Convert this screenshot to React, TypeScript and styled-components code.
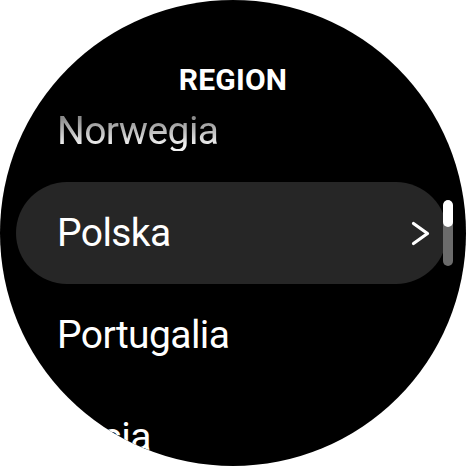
import React from "react";
import styled, { createGlobalStyle } from "styled-components";

const Global = createGlobalStyle`
  html, body { margin: 0; padding: 0; background: #ffffff; }
  #root { width: 466px; height: 466px; }
`;

const Watch = styled.div`
  position: relative;
  width: 466px;
  height: 466px;
  border-radius: 50%;
  overflow: hidden;
  background: #000000;
  font-family: Roboto, "Liberation Sans", sans-serif;
  color: #ffffff;
`;

const Title = styled.div`
  position: absolute;
  top: 62px;
  left: 0;
  right: 0;
  text-align: center;
  font-size: 30px;
  font-weight: 700;
  line-height: 36px;
  letter-spacing: 0.2px;
`;

const List = styled.div`
  display: flex;
  flex-direction: column;
  padding-top: 80px;
`;

const Row = styled.div<{ $active?: boolean }>`
  display: flex;
  align-items: center;
  justify-content: space-between;
  height: 102px;
  margin: 0 19px 0 16px;
  padding: 0 17px 0 41px;
  box-sizing: border-box;
  border-radius: 51px;
  background: ${(p) => (p.$active ? "#262626" : "transparent")};
`;

const Label = styled.span<{ $faded?: boolean }>`
  font-size: 39px;
  line-height: 1;
  letter-spacing: -0.6px;
  ${(p) =>
    p.$faded
      ? `background: linear-gradient(to bottom, #8a8a8a 15%, #f2f2f2 85%);
         -webkit-background-clip: text;
         background-clip: text;
         color: transparent;`
      : "color: #ffffff;"}
`;

const Chevron = styled.svg`
  width: 19px;
  height: 25px;
  flex: none;
`;

const Scroll = styled.div`
  position: absolute;
  left: 443px;
  top: 200px;
  width: 10px;
  height: 66px;
  border-radius: 5px;
  background: #6b6b6b;
  overflow: hidden;
`;

const Thumb = styled.div`
  height: 27px;
  border-radius: 5px;
  background: #ffffff;
`;

const items = [
  { name: "Norwegia", faded: true },
  { name: "Polska", active: true },
  { name: "Portugalia" },
  { name: "Rosja" },
];

export default function App() {
  return (
    <>
      <Global />
      <Watch>
        <List>
          {items.map((it) => (
            <Row key={it.name} $active={it.active}>
              <Label $faded={it.faded}>{it.name}</Label>
              {it.active && (
                <Chevron viewBox="0 0 19 25">
                  <polyline
                    points="2.5,2.5 16.5,12.5 2.5,22.5"
                    fill="none"
                    stroke="#ffffff"
                    strokeWidth="3.2"
                    strokeLinecap="round"
                    strokeLinejoin="round"
                  />
                </Chevron>
              )}
            </Row>
          ))}
        </List>
        <Title>REGION</Title>
        <Scroll>
          <Thumb />
        </Scroll>
      </Watch>
    </>
  );
}
